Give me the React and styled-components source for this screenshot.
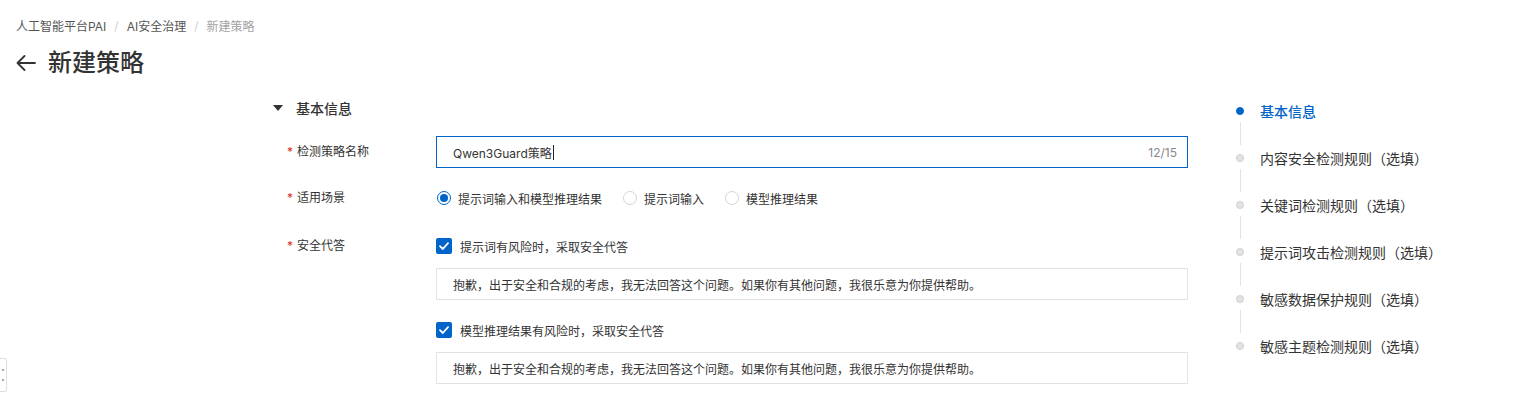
import React from "react";
import styled, { createGlobalStyle } from "styled-components";

const GlobalStyle = createGlobalStyle`
  body {
    margin: 0;
    background: #fff;
    font-family: Inter, "Noto Sans CJK SC", sans-serif;
    color: #333;
  }
`;

const steps = [
  "基本信息",
  "内容安全检测规则（选填）",
  "关键词检测规则（选填）",
  "提示词攻击检测规则（选填）",
  "敏感数据保护规则（选填）",
  "敏感主题检测规则（选填）",
];

const answer =
  "抱歉，出于安全和合规的考虑，我无法回答这个问题。如果你有其他问题，我很乐意为你提供帮助。";

function CheckMark() {
  return (
    <svg width="10" height="8" viewBox="0 0 10 8">
      <path d="M1 4.2 3.8 7 9 1.2" />
    </svg>
  );
}

export default function App() {
  return (
    <>
      <GlobalStyle />
      <Page>
        <Breadcrumb>
          <Crumb>人工智能平台PAI</Crumb>
          <Sep>/</Sep>
          <Crumb>AI安全治理</Crumb>
          <Sep>/</Sep>
          <Crumb $current>新建策略</Crumb>
        </Breadcrumb>
        <TitleRow>
          <BackIcon width="20" height="16" viewBox="0 0 20 16">
            <path d="M19 8H1.5M8.5 1 1.5 8l7 7" />
          </BackIcon>
          <Title>新建策略</Title>
        </TitleRow>

        <Body>
          <Form>
            <SectionHeader>
              <Caret />
              基本信息
            </SectionHeader>

            <FormItem>
              <Label>
                <Star>*</Star>检测策略名称
              </Label>
              <Control>
                <Input $focused>
                  <span>Qwen3Guard策略</span>
                  <Cursor />
                  <Counter>12/15</Counter>
                </Input>
              </Control>
            </FormItem>

            <FormItem $gap="16px">
              <Label>
                <Star>*</Star>适用场景
              </Label>
              <Control>
                <RadioGroup>
                  <RadioOption>
                    <Radio $checked />
                    提示词输入和模型推理结果
                  </RadioOption>
                  <RadioOption>
                    <Radio />
                    提示词输入
                  </RadioOption>
                  <RadioOption>
                    <Radio />
                    模型推理结果
                  </RadioOption>
                </RadioGroup>
              </Control>
            </FormItem>

            <FormItem>
              <Label>
                <Star>*</Star>安全代答
              </Label>
              <Control>
                <CheckLine>
                  <Checkbox>
                    <CheckMark />
                  </Checkbox>
                  提示词有风险时，采取安全代答
                </CheckLine>
                <TextBox>{answer}</TextBox>
                <CheckLine $spaced>
                  <Checkbox>
                    <CheckMark />
                  </Checkbox>
                  模型推理结果有风险时，采取安全代答
                </CheckLine>
                <TextBox>{answer}</TextBox>
              </Control>
            </FormItem>
          </Form>

          <Steps>
            {steps.map((s, i) => (
              <React.Fragment key={s}>
                <Step>
                  <DotCol>
                    <Dot $active={i === 0} />
                  </DotCol>
                  <StepText $active={i === 0}>{s}</StepText>
                </Step>
                {i < steps.length - 1 && (
                  <Connector>
                    <Line />
                  </Connector>
                )}
              </React.Fragment>
            ))}
          </Steps>
        </Body>
        <SideHandle>
          <i />
          <i />
        </SideHandle>
      </Page>
    </>
  );
}

const Page = styled.div`
  position: relative;
  min-height: 400px;
  padding: 15px 0 0 16px;
  box-sizing: border-box;
`;

const Breadcrumb = styled.div`
  display: flex;
  align-items: center;
  gap: 8px;
  height: 20px;
  font-size: 12px;
`;

const Crumb = styled.span`
  color: ${(p) => (p.$current ? "#a3a3a3" : "#555")};
`;

const Sep = styled.span`
  color: #d0d0d0;
`;

const TitleRow = styled.div`
  display: flex;
  align-items: center;
  gap: 12px;
  height: 32px;
  margin-top: 12px;
`;

const BackIcon = styled.svg`
  fill: none;
  stroke: #333;
  stroke-width: 1.8;
  stroke-linecap: round;
  stroke-linejoin: round;
`;

const Title = styled.h1`
  margin: 0;
  font-size: 24px;
  font-weight: 500;
  line-height: 32px;
  color: #333;
`;

const Body = styled.div`
  display: flex;
  align-items: flex-start;
  gap: 48px;
  margin-top: 19px;
  padding-left: 257px;
`;

const Form = styled.div`
  width: 915px;
  flex-shrink: 0;
`;

const SectionHeader = styled.div`
  display: flex;
  align-items: center;
  height: 20px;
  font-size: 14px;
  font-weight: 500;
  color: #333;
  margin-bottom: 18px;
`;

const Caret = styled.span`
  width: 0;
  height: 0;
  border-left: 5px solid transparent;
  border-right: 5px solid transparent;
  border-top: 6px solid #333;
  margin-right: 13px;
`;

const FormItem = styled.div`
  display: flex;
  margin-bottom: ${(p) => p.$gap || "14px"};
`;

const Label = styled.div`
  width: 163px;
  flex-shrink: 0;
  box-sizing: border-box;
  padding-left: 14px;
  font-size: 12px;
  line-height: 32px;
  color: #333;
`;

const Star = styled.span`
  color: #d93026;
  margin-right: 4px;
`;

const Control = styled.div`
  flex: 1;
  display: flex;
  flex-direction: column;
`;

const Input = styled.div`
  display: flex;
  align-items: center;
  height: 32px;
  box-sizing: border-box;
  padding: 0 10px 0 16px;
  border: 1px solid ${(p) => (p.$focused ? "#0064c8" : "#e3e3e3")};
  font-size: 12px;
  color: #333;
`;

const Cursor = styled.span`
  width: 1px;
  height: 15px;
  background: #222;
  margin-left: 1px;
`;

const Counter = styled.span`
  margin-left: auto;
  color: #888;
  font-size: 12px;
`;

const RadioGroup = styled.div`
  display: flex;
  align-items: center;
  gap: 20px;
  height: 32px;
`;

const RadioOption = styled.label`
  display: flex;
  align-items: center;
  gap: 7px;
  font-size: 12px;
  color: #333;
`;

const Radio = styled.span`
  width: 14px;
  height: 14px;
  box-sizing: border-box;
  border-radius: 50%;
  border: 1px solid ${(p) => (p.$checked ? "#0064c8" : "#d5d5d5")};
  display: flex;
  align-items: center;
  justify-content: center;
  margin-left: 1px;
  &::after {
    content: "";
    width: 8px;
    height: 8px;
    border-radius: 50%;
    background: ${(p) => (p.$checked ? "#0064c8" : "transparent")};
  }
`;

const CheckLine = styled.div`
  display: flex;
  align-items: center;
  gap: 8px;
  height: 32px;
  margin-top: ${(p) => (p.$spaced ? "14px" : "0")};
  font-size: 12px;
  color: #333;
`;

const Checkbox = styled.span`
  width: 16px;
  height: 16px;
  border-radius: 2px;
  background: #0064c8;
  display: flex;
  align-items: center;
  justify-content: center;
  svg {
    fill: none;
    stroke: #fff;
    stroke-width: 1.8;
    stroke-linecap: round;
    stroke-linejoin: round;
  }
`;

const TextBox = styled.div`
  margin-top: 6px;
  height: 32px;
  box-sizing: border-box;
  display: flex;
  align-items: center;
  padding: 0 16px;
  border: 1px solid #e3e3e3;
  font-size: 12px;
  color: #333;
`;

const Steps = styled.div`
  margin-top: 3px;
  display: flex;
  flex-direction: column;
`;

const Step = styled.div`
  display: flex;
  align-items: center;
  height: 20px;
`;

const DotCol = styled.div`
  width: 8px;
  display: flex;
  justify-content: center;
  margin-right: 16px;
`;

const Dot = styled.span`
  width: 8px;
  height: 8px;
  box-sizing: border-box;
  border-radius: 50%;
  background: ${(p) => (p.$active ? "#0064c8" : "#e3e3e3")};
  border: 1px solid ${(p) => (p.$active ? "#0064c8" : "#cfcfcf")};
`;

const StepText = styled.span`
  font-size: 14px;
  color: ${(p) => (p.$active ? "#0064c8" : "#333")};
  font-weight: ${(p) => (p.$active ? 500 : 400)};
  white-space: nowrap;
`;

const Connector = styled.div`
  height: 27px;
  width: 8px;
  display: flex;
  justify-content: center;
`;

const Line = styled.span`
  width: 1px;
  height: 23px;
  margin-top: 1px;
  background: #e3e3e3;
`;

const SideHandle = styled.div`
  position: absolute;
  left: 0;
  top: 358px;
  width: 7px;
  height: 34px;
  box-sizing: border-box;
  border: 1px solid #dedede;
  border-left: none;
  border-radius: 0 3px 3px 0;
  background: #fff;
  display: flex;
  flex-direction: column;
  align-items: center;
  justify-content: center;
  gap: 8px;
  i {
    width: 2px;
    height: 2px;
    background: #aaa;
  }
`;
